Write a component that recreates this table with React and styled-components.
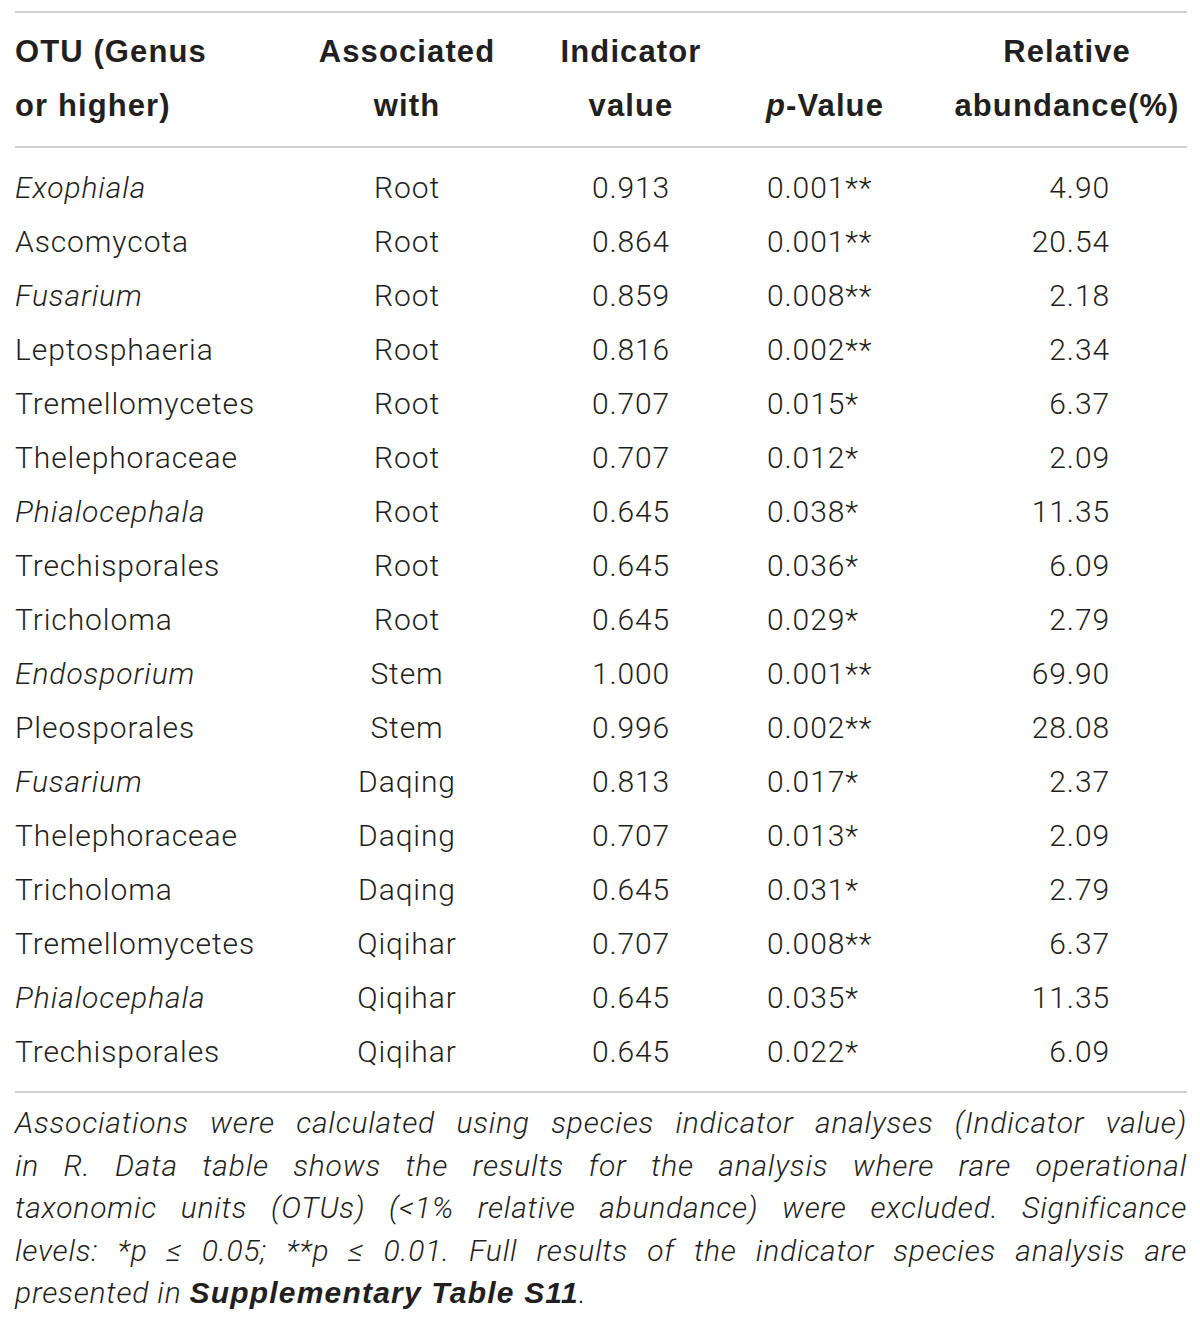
import styled, { createGlobalStyle } from "styled-components";

const GlobalStyle = createGlobalStyle`
  body {
    margin: 0;
    background: #fff;
  }
`;

const Page = styled.div`
  width: 1172px;
  padding: 11px 0 0 15px;
  color: #231f20;
  font-family: Roboto, "Liberation Sans", sans-serif;
  font-weight: 300;
`;

const Rule = styled.div`
  height: 2px;
  background: #d0d0d0;
`;

const Section = styled.div`
  padding: 12px 0 13px;
`;

const Row = styled.div`
  display: grid;
  grid-template-columns: 285px 214px 234px 154px 285px;
  height: ${(p) => (p.$head ? 108 : 54)}px;
  align-items: center;
  font-size: 30px;
  letter-spacing: 0.9px;
`;

const Cell = styled.div`
  text-align: ${(p) => p.$align || "left"};
  padding: ${(p) => p.$pad || "0"};
  font-style: ${(p) => (p.$italic ? "italic" : "normal")};
  white-space: nowrap;
`;

const HeadCell = styled(Cell)`
  font-family: "Liberation Sans", Arial, sans-serif;
  font-weight: 700;
  font-size: 31px;
  letter-spacing: 1.1px;
  line-height: 54px;
  align-self: end;
`;

const Note = styled.div`
  margin-top: 9px;
  font-size: 30px;
  letter-spacing: 0.8px;
  line-height: 42.5px;
  font-style: italic;

  strong {
    font-family: "Liberation Sans", Arial, sans-serif;
    font-weight: 700;
    letter-spacing: 1.2px;
  }
`;

const NoteLine = styled.div`
  text-align: ${(p) => (p.$last ? "left" : "justify")};
  text-align-last: ${(p) => (p.$last ? "left" : "justify")};
  white-space: nowrap;
`;

const rows = [
  ["Exophiala", true, "Root", "0.913", "0.001**", "4.90"],
  ["Ascomycota", false, "Root", "0.864", "0.001**", "20.54"],
  ["Fusarium", true, "Root", "0.859", "0.008**", "2.18"],
  ["Leptosphaeria", false, "Root", "0.816", "0.002**", "2.34"],
  ["Tremellomycetes", false, "Root", "0.707", "0.015*", "6.37"],
  ["Thelephoraceae", false, "Root", "0.707", "0.012*", "2.09"],
  ["Phialocephala", true, "Root", "0.645", "0.038*", "11.35"],
  ["Trechisporales", false, "Root", "0.645", "0.036*", "6.09"],
  ["Tricholoma", false, "Root", "0.645", "0.029*", "2.79"],
  ["Endosporium", true, "Stem", "1.000", "0.001**", "69.90"],
  ["Pleosporales", false, "Stem", "0.996", "0.002**", "28.08"],
  ["Fusarium", true, "Daqing", "0.813", "0.017*", "2.37"],
  ["Thelephoraceae", false, "Daqing", "0.707", "0.013*", "2.09"],
  ["Tricholoma", false, "Daqing", "0.645", "0.031*", "2.79"],
  ["Tremellomycetes", false, "Qiqihar", "0.707", "0.008**", "6.37"],
  ["Phialocephala", true, "Qiqihar", "0.645", "0.035*", "11.35"],
  ["Trechisporales", false, "Qiqihar", "0.645", "0.022*", "6.09"],
];

export default function App() {
  return (
    <Page>
      <GlobalStyle />
      <Rule />
      <Section>
        <Row $head>
          <HeadCell>
            OTU (Genus
            <br />
            or higher)
          </HeadCell>
          <HeadCell $align="center">
            Associated
            <br />
            with
          </HeadCell>
          <HeadCell $align="center">
            Indicator
            <br />
            value
          </HeadCell>
          <HeadCell $align="center">
            <i>p</i>-Value
          </HeadCell>
          <HeadCell $align="center" $pad="0 0 0 45px">
            Relative
            <br />
            abundance(%)
          </HeadCell>
        </Row>
      </Section>
      <Rule />
      <Section>
        {rows.map(([otu, italic, assoc, ind, p, rel], i) => (
          <Row key={i}>
            <Cell $italic={italic}>{otu}</Cell>
            <Cell $align="center">{assoc}</Cell>
            <Cell $align="center">{ind}</Cell>
            <Cell $pad="0 0 0 19px">{p}</Cell>
            <Cell $align="right" $pad="0 77px 0 0">
              {rel}
            </Cell>
          </Row>
        ))}
      </Section>
      <Rule />
      <Note>
        <NoteLine>
          Associations were calculated using species indicator analyses
          (Indicator value)
        </NoteLine>
        <NoteLine>
          in R. Data table shows the results for the analysis where rare
          operational
        </NoteLine>
        <NoteLine>
          taxonomic units (OTUs) (&lt;1% relative abundance) were excluded.
          Significance
        </NoteLine>
        <NoteLine>
          levels: *p ≤ 0.05; **p ≤ 0.01. Full results of the indicator species
          analysis are
        </NoteLine>
        <NoteLine $last>
          presented in <strong>Supplementary Table S11</strong>.
        </NoteLine>
      </Note>
    </Page>
  );
}
